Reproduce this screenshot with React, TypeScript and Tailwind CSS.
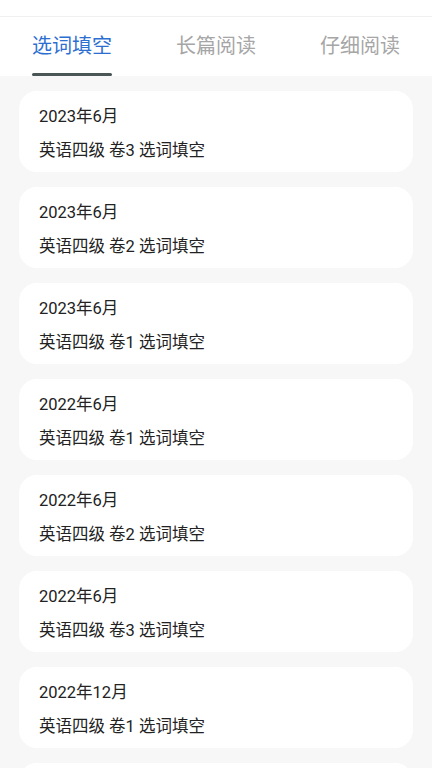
import { useState } from 'react';

const tabs = ['选词填空', '长篇阅读', '仔细阅读'];

const papers = [
    { date: '2023年6月', title: '英语四级 卷3 选词填空' },
    { date: '2023年6月', title: '英语四级 卷2 选词填空' },
    { date: '2023年6月', title: '英语四级 卷1 选词填空' },
    { date: '2022年6月', title: '英语四级 卷1 选词填空' },
    { date: '2022年6月', title: '英语四级 卷2 选词填空' },
    { date: '2022年6月', title: '英语四级 卷3 选词填空' },
    { date: '2022年12月', title: '英语四级 卷1 选词填空' },
    { date: '2022年12月', title: '英语四级 卷2 选词填空' },
];

export default function App() {
    const [active, setActive] = useState(0);

    return (
        <div className="w-full h-screen overflow-hidden bg-[#f7f7f7] font-['Roboto','Noto_Sans_CJK_SC',sans-serif]">
            {/* Top strip */}
            <div className="h-[17px] bg-white border-b border-[#f0f0f0]" />

            {/* Tabs */}
            <div className="grid grid-cols-3 h-[59px] bg-white">
                {tabs.map((t, i) => (
                    <button
                        key={t}
                        onClick={() => setActive(i)}
                        className="relative flex items-center justify-center"
                    >
                        <span
                            className={
                                i === active
                                    ? 'text-[20px] leading-none text-[#2d6fd1] pb-[2px]'
                                    : 'text-[20px] leading-none text-[#a6a6a6] pb-[2px]'
                            }
                        >
                            {t}
                        </span>
                        {i === active && (
                            <span className="absolute bottom-0 left-1/2 -translate-x-1/2 w-[80px] h-[3px] bg-[#4a5556] rounded-full" />
                        )}
                    </button>
                ))}
            </div>

            {/* List */}
            <div className="flex flex-col gap-[15px] px-[19px] pt-[15px]">
                {papers.map((p, i) => (
                    <div key={i} className="bg-white rounded-[18px] pl-[20px] pt-[14px] pb-[9px]">
                        <div className="h-[24px] flex items-center text-[16.5px] text-[#222]">{p.date}</div>
                        <div className="h-[24px] mt-[10px] flex items-center text-[16.5px] text-[#222]">{p.title}</div>
                    </div>
                ))}
            </div>
        </div>
    );
}
